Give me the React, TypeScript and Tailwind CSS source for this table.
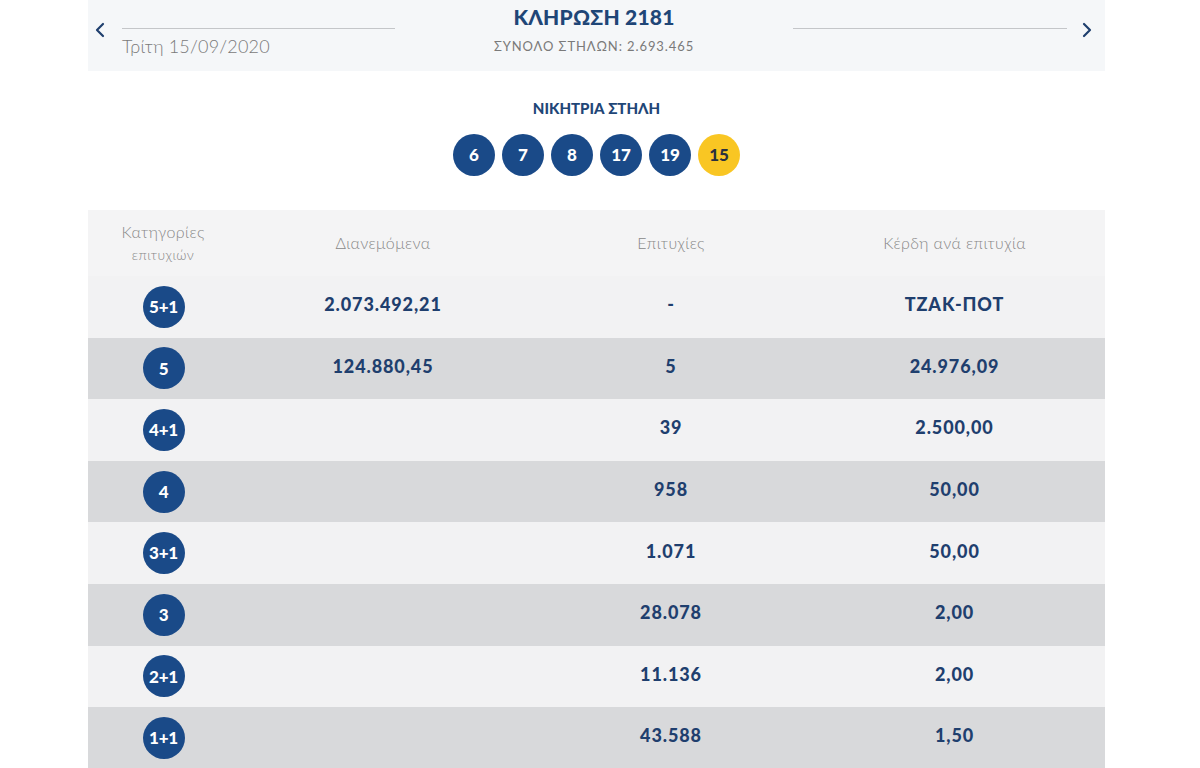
import React from "react";

const rows = [
  { cat: "5+1", dist: "2.073.492,21", wins: "-", prize: "ΤΖΑΚ-ΠΟΤ" },
  { cat: "5", dist: "124.880,45", wins: "5", prize: "24.976,09" },
  { cat: "4+1", dist: "", wins: "39", prize: "2.500,00" },
  { cat: "4", dist: "", wins: "958", prize: "50,00" },
  { cat: "3+1", dist: "", wins: "1.071", prize: "50,00" },
  { cat: "3", dist: "", wins: "28.078", prize: "2,00" },
  { cat: "2+1", dist: "", wins: "11.136", prize: "2,00" },
  { cat: "1+1", dist: "", wins: "43.588", prize: "1,50" },
];

const balls = ["6", "7", "8", "17", "19"];

function Chevron({ dir }: { dir: "left" | "right" }) {
  return (
    <svg width="12" height="16" viewBox="0 0 12 16" className="shrink-0">
      <path
        d={dir === "left" ? "M9 2 L3 8 L9 14" : "M3 2 L9 8 L3 14"}
        fill="none"
        stroke="#1f3f6e"
        strokeWidth="2.2"
        strokeLinecap="round"
        strokeLinejoin="round"
      />
    </svg>
  );
}

export default function App() {
  return (
    <div className="w-[1200px] h-[768px] overflow-hidden bg-white font-['Lato','Noto_Sans',sans-serif]">
      <div className="w-[1017px] ml-[88px]">
        {/* draw header */}
        <div className="h-[71px] bg-[#f5f7f9] flex items-start">
          <div className="w-[34px] pl-[6px] pt-[22px]">
            <Chevron dir="left" />
          </div>
          <div className="w-[273px] pt-[28px]">
            <div className="h-px bg-[#c4c6c9]" />
            <div className="mt-[6px] text-[18px] leading-[22px] text-[#7a7a7a] font-light tracking-[0.2px]">
              Τρίτη 15/09/2020
            </div>
          </div>
          <div className="flex-1 flex flex-col items-center pt-[4px]">
            <div className="text-[21px] leading-[26px] font-black text-[#1f4677] tracking-[0.2px]">
              ΚΛΗΡΩΣΗ 2181
            </div>
            <div className="mt-[8px] text-[13px] leading-[16px] text-[#7a7a7a] tracking-[0.9px]">
              ΣΥΝΟΛΟ ΣΤΗΛΩΝ: 2.693.465
            </div>
          </div>
          <div className="w-[274px] pt-[28px]">
            <div className="h-px bg-[#c4c6c9]" />
          </div>
          <div className="w-[38px] pl-[14px] pt-[22px]">
            <Chevron dir="right" />
          </div>
        </div>

        {/* winning column */}
        <div className="h-[139px] flex flex-col items-center pt-[28px]">
          <div className="text-[15px] leading-[18px] font-black text-[#1f4677]">
            ΝΙΚΗΤΡΙΑ ΣΤΗΛΗ
          </div>
          <div className="mt-[17px] flex gap-[7px]">
            {balls.map((b) => (
              <div
                key={b}
                className="w-[42px] h-[42px] rounded-full bg-[#1a4a88] text-white flex items-center justify-center text-[17px] font-black"
              >
                {b}
              </div>
            ))}
            <div className="w-[42px] h-[42px] rounded-full bg-[#f9c623] text-[#2a3140] flex items-center justify-center text-[17px] font-black">
              15
            </div>
          </div>
        </div>

        {/* prize table */}
        <div className="grid grid-cols-[150px_290px_286px_291px] h-[66px] bg-[#f4f4f5] items-center text-[16px] text-[#888] font-light tracking-[0.4px]">
          <div className="text-center leading-[22px]">
            Κατηγορίες
            <br />
            <span className="text-[14px]">επιτυχιών</span>
          </div>
          <div className="text-center">Διανεμόμενα</div>
          <div className="text-center">Επιτυχίες</div>
          <div className="text-center pr-[10px]">Κέρδη ανά επιτυχία</div>
        </div>
        {rows.map((r, i) => (
          <div
            key={r.cat}
            className={
              "grid grid-cols-[150px_290px_286px_291px] h-[61.6px] items-center text-[18px] font-black text-[#1f3f6e] tracking-[0.9px] " +
              (i % 2 === 0 ? "bg-[#f2f2f3]" : "bg-[#d8d9db]")
            }
          >
            <div className="flex justify-center pl-[1px] tracking-normal">
              <div className="w-[42px] h-[42px] rounded-full bg-[#1a4a88] text-white flex items-center justify-center text-[17px] font-black tracking-[-0.2px]">
                {r.cat}
              </div>
            </div>
            <div className="text-center -mt-[4px]">{r.dist}</div>
            <div className="text-center -mt-[4px]">{r.wins}</div>
            <div className="text-center -mt-[4px] pr-[10px]">{r.prize}</div>
          </div>
        ))}
      </div>
    </div>
  );
}
